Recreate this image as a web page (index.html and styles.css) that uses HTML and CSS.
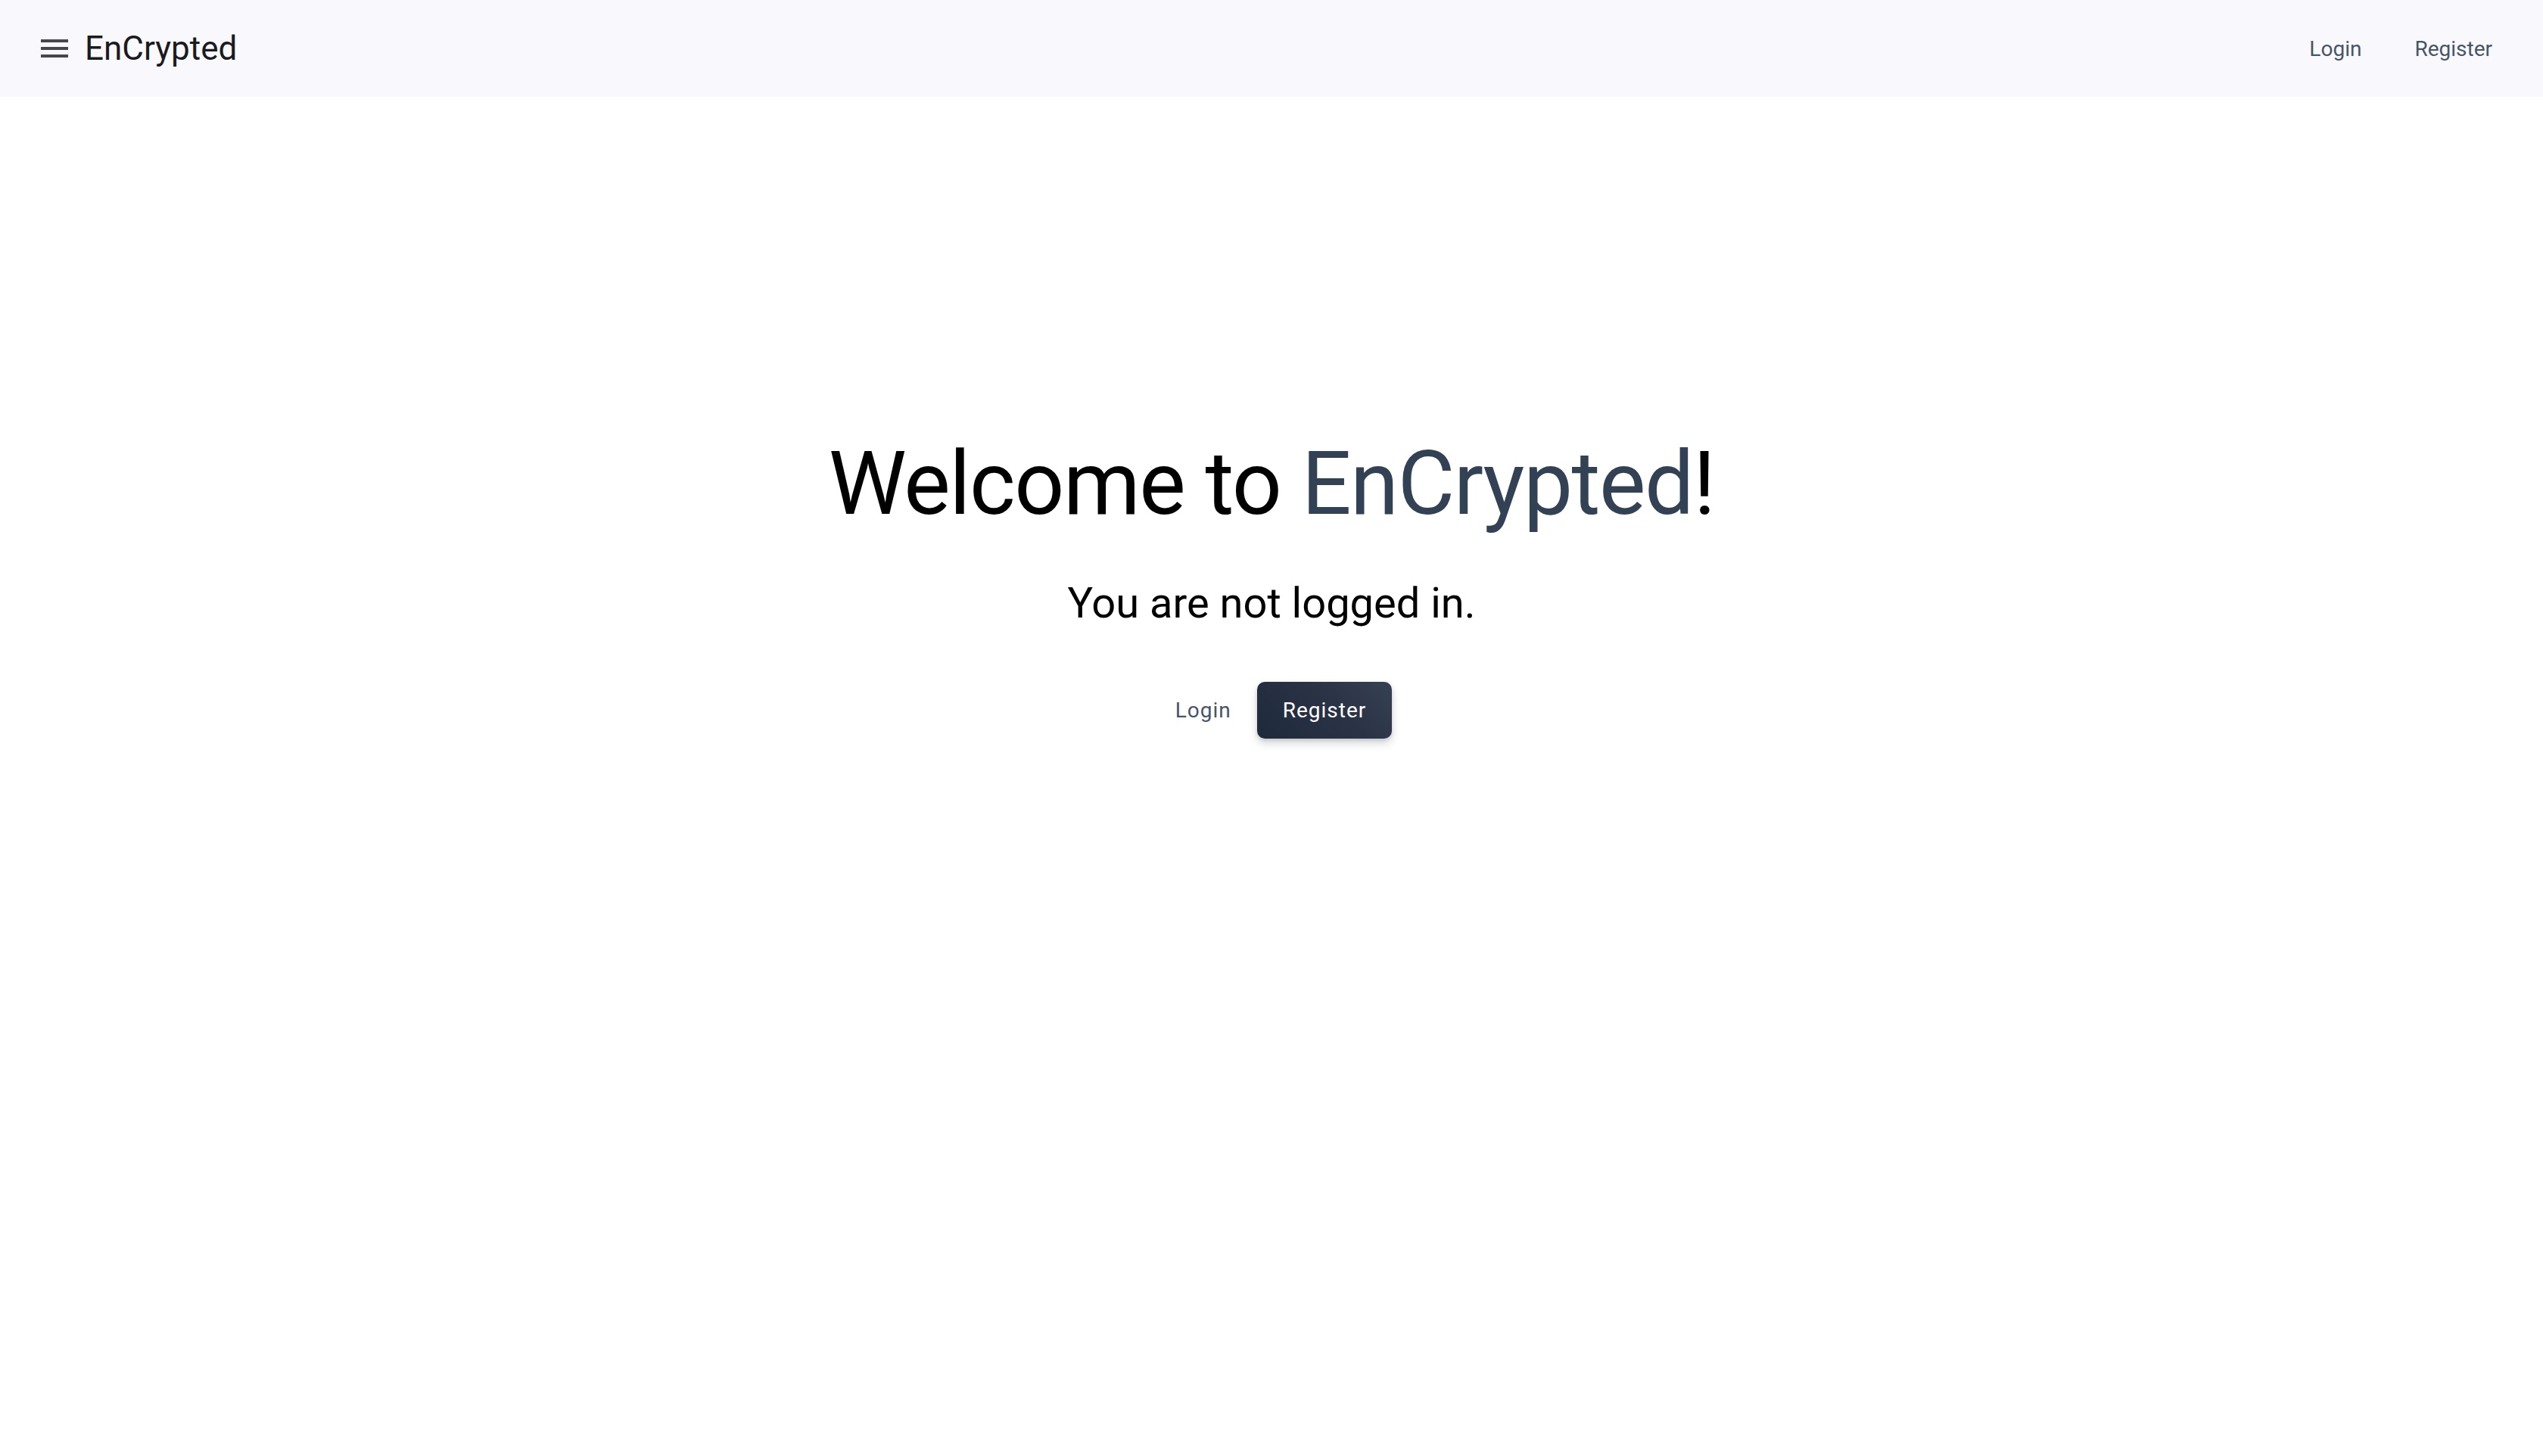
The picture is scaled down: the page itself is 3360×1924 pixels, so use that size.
FILE: index.html
```html
<!DOCTYPE html>
<html lang="en">
<head>
<meta charset="utf-8">
<title>EnCrypted</title>
<link rel="stylesheet" href="styles.css">
</head>
<body>
<header class="app-bar">
  <div class="brand">
    <button class="nav-icon" aria-label="Menu">
      <svg viewBox="0 0 24 24" width="48" height="48"><path fill="currentColor" d="M3 18h18v-2H3v2zm0-5h18v-2H3v2zm0-7v2h18V6H3z"/></svg>
    </button>
    <div class="title">EnCrypted</div>
  </div>
  <nav class="top-nav">
    <a class="nav-link" href="#">Login</a>
    <a class="nav-link" href="#">Register</a>
  </nav>
</header>
<main class="hero">
  <h1 class="hero-title">Welcome to <span class="accent">EnCrypted</span>!</h1>
  <p class="hero-sub">You are not logged in.</p>
  <div class="actions">
    <a class="btn btn-text" href="#">Login</a>
    <a class="btn btn-primary" href="#">Register</a>
  </div>
</main>
</body>
</html>
```
FILE: styles.css
```css
* { box-sizing: border-box; }
html, body { margin: 0; padding: 0; }
body {
  font-family: Roboto, "Noto Sans", sans-serif;
  background: #ffffff;
  color: #000;
  width: 3360px;
  min-height: 1924px;
}
.app-bar {
  height: 128px;
  background: #f9f9fd;
  display: flex;
  align-items: center;
  justify-content: space-between;
  padding: 0 35px 0 48px;
}
.brand { display: flex; align-items: center; }
.nav-icon {
  border: 0;
  background: transparent;
  padding: 0;
  width: 48px;
  height: 48px;
  color: #46464c;
  display: flex;
  align-items: center;
  justify-content: center;
}
.nav-icon svg { display: block; }
.title {
  margin-left: 16px;
  font-size: 44px;
  line-height: 1;
  color: #1b1b1f;
  font-weight: 400;
}
.top-nav { display: flex; gap: 6px; }
.nav-link {
  display: flex;
  align-items: center;
  height: 72px;
  padding: 0 32px;
  font-size: 28px;
  color: #475569;
  text-decoration: none;
  font-weight: 400;
}
.hero {
  display: flex;
  flex-direction: column;
  align-items: center;
  padding-top: 439px;
}
.hero-title {
  margin: 0;
  font-size: 116px;
  line-height: 144px;
  letter-spacing: -1.5px;
  font-weight: 400;
  color: #000;
}
.accent { color: #334155; }
.hero-sub {
  margin: 53px 0 0;
  font-size: 56px;
  line-height: 67px;
  font-weight: 400;
  color: #000;
}
.actions {
  margin-top: 70px;
  display: flex;
  gap: 2px;
  align-items: center;
}
.btn {
  display: flex;
  align-items: center;
  justify-content: center;
  height: 75px;
  padding: 0 32px;
  font-size: 28px;
  letter-spacing: 1px;
  text-decoration: none;
  border-radius: 10px;
  font-weight: 400;
}
.btn-text { color: #475569; }
.btn-primary {
  color: #ffffff;
  padding: 0 34px;
  background: linear-gradient(45deg, #1e293b 0%, #2a3446 60%, #364153 100%);
  box-shadow: 0 6px 12px rgba(15, 23, 42, 0.18), 0 2px 4px rgba(15, 23, 42, 0.12);
}
```
